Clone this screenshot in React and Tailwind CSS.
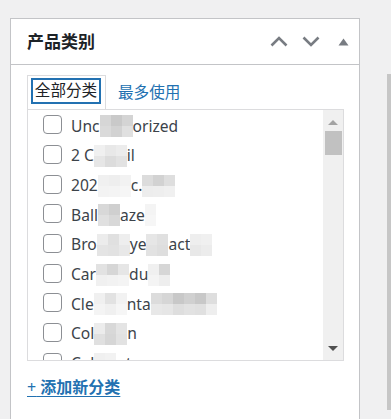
import React from "react";

const FONT = { fontFamily: '"Noto Sans", "Noto Sans CJK SC", sans-serif' };

function Mosaic({ cells }) {
  return (
    <span className="inline-flex h-[22px] items-stretch align-middle">
      {cells.map((c, i) => (
        <span key={i} className="inline-flex flex-col w-[11px]">
          <span className="flex-1" style={{ backgroundColor: c[0] }} />
          <span className="flex-1" style={{ backgroundColor: c[1] || c[0] }} />
        </span>
      ))}
    </span>
  );
}

const rows = [
  [["t", "Unc"], ["m", [["#d6d6d6", "#dadada"], ["#c9c9c9", "#d2d2d2"], ["#d4d4d4", "#e0e0e0"]]], ["t", "orized"]],
  [["t", "2 C"], ["m", [["#f0f0f0", "#e6e6e6"], ["#e8e8e8", "#dcdcdc"], ["#ececec", "#e2e2e2"]]], ["t", "il"]],
  [["t", "202"], ["m", [["#f0f0f0", "#f3f3f3"], ["#eeeeee", "#f4f4f4"], ["#f2f2f2", "#f6f6f6"]]], ["t", "c."], ["m", [["#dcdcdc", "#ededed"], ["#d2d2d2", "#eeeeee"], ["#dedede", "#f0f0f0"]]]],
  [["t", "Ball"], ["m", [["#d8d8d8", "#e0e0e0"], ["#cfcfcf", "#d8d8d8"]]], ["t", "aze"], ["m", [["#f4f4f4", "#f6f6f6"]]]],
  [["t", "Bro"], ["m", [["#ececec", "#e4e4e4"], ["#e0e0e0", "#e2e2e2"], ["#eeeeee", "#e8e8e8"]]], ["t", "ye "], ["m", [["#e6e6e6", "#e2e2e2"], ["#e0e0e0", "#dedede"]]], ["t", "act"], ["m", [["#eeeeee", "#e8e8e8"], ["#f0f0f0", "#ececec"]]]],
  [["t", "Car"], ["m", [["#e2e2e2", "#f0f0f0"], ["#d6d6d6", "#f2f2f2"], ["#e6e6e6", "#f4f4f4"]]], ["t", "du"], ["m", [["#f0f0f0", "#f4f4f4"], ["#d6d6d6", "#eeeeee"]]]],
  [["t", "Cle"], ["m", [["#f0f0f0", "#f4f4f4"], ["#e2e2e2", "#f0f0f0"], ["#f2f2f2", "#f6f6f6"]]], ["t", "nta"], ["m", [["#dcdcdc", "#e8e8e8"], ["#d6d6d6", "#e6e6e6"], ["#c8c8c8", "#dedede"], ["#d0d0d0", "#e2e2e2"], ["#c8c8c8", "#e0e0e0"], ["#dedede", "#eeeeee"]]]],
  [["t", "Col"], ["m", [["#ececec", "#e0e0e0"], ["#d8d8d8", "#d6d6d6"], ["#e4e4e4", "#e2e2e2"]]], ["t", "n"]],
  [["t", "Col"], ["m", [["#f0f0f0", "#f0f0f0"], ["#f2f2f2", "#f2f2f2"]]], ["t", "nt"]],
];

function Checkbox() {
  return <span className="inline-block shrink-0 w-[19px] h-[19px] border-[1.5px] border-[#8c8f94] rounded-[4px] bg-white" />;
}

export default function App() {
  return (
    <div className="h-[419px] w-[391px] overflow-hidden bg-[#f0f0f1] flex items-start pt-[18px] pl-[10px]" style={FONT}>
      <div className="w-[350px] h-[410px] shrink-0 bg-white border border-b-0 border-[#c3c4c7] flex flex-col">
        <div className="h-[46px] border-b border-[#c3c4c7] flex items-center justify-between pl-[16px]">
          <h2 className="text-[17px] font-bold text-[#1d2327] leading-none" style={FONT}>产品类别</h2>
          <div className="flex items-center h-full">
            <span className="w-[32px] h-full flex items-center justify-center">
              <svg width="18" height="11" viewBox="0 0 18 11">
                <polyline points="1.5,9.5 9,2 16.5,9.5" fill="none" stroke="#787c82" strokeWidth="2.6" />
              </svg>
            </span>
            <span className="w-[32px] h-full flex items-center justify-center">
              <svg width="18" height="11" viewBox="0 0 18 11">
                <polyline points="1.5,1.5 9,9 16.5,1.5" fill="none" stroke="#787c82" strokeWidth="2.6" />
              </svg>
            </span>
            <span className="w-[32px] h-full flex items-center justify-center">
              <svg width="11" height="8" viewBox="0 0 11 8">
                <polygon points="0.5,7.5 5.5,0.5 10.5,7.5" fill="#787c82" />
              </svg>
            </span>
          </div>
        </div>
        <div className="pt-[10px] px-[16px]">
          <div className="flex items-end">
            <div className="w-[79px] h-[34px] border border-b-0 border-[#dcdcde] bg-white pt-[2px] pl-[3px]">
              <span className="flex items-center justify-center w-[70px] h-[26px] border-2 border-[#2271b1] text-[15.6px] text-[#1d2327] leading-none">全部分类</span>
            </div>
            <span className="ml-[12px] mb-[8px] text-[15.6px] text-[#2271b1] leading-none">最多使用</span>
          </div>
          <div className="w-[317px] h-[252px] border border-[#dcdcde] flex">
            <div className="flex-1 overflow-hidden pl-[15px]">
              {rows.map((r, i) => (
                <div key={i} className="h-[29.7px] flex items-center shrink-0">
                  <Checkbox />
                  <span className="ml-[9px] pt-[3px] text-[15.6px] text-[#3c434a] whitespace-nowrap flex items-center leading-none">
                    {r.map((seg, j) =>
                      seg[0] === "t" ? <span key={j}>{seg[1]}</span> : <Mosaic key={j} cells={seg[1]} />
                    )}
                  </span>
                </div>
              ))}
            </div>
            <div className="w-[20px] bg-[#f0f0f0] flex flex-col items-center pt-[10px] pb-[9px]">
              <svg width="10" height="5" viewBox="0 0 10 5"><polygon points="0,5 5,0 10,5" fill="#a3a3a3" /></svg>
              <div className="mt-[6px] w-[17px] h-[24px] bg-[#c1c1c1]" />
              <div className="flex-1" />
              <svg width="10" height="5" viewBox="0 0 10 5"><polygon points="0,0 10,0 5,5" fill="#505050" /></svg>
            </div>
          </div>
          <div className="mt-[14px]">
            <a className="text-[16px] font-bold text-[#2271b1] underline underline-offset-[3px] leading-[24px]" style={FONT}>
              <span className="font-normal">+</span> 添加新分类
            </a>
          </div>
        </div>
      </div>
      <div className="ml-[27px] mt-[56px] w-[4px] h-[336px] bg-[#c6c6c6] shrink-0" />
    </div>
  );
}
